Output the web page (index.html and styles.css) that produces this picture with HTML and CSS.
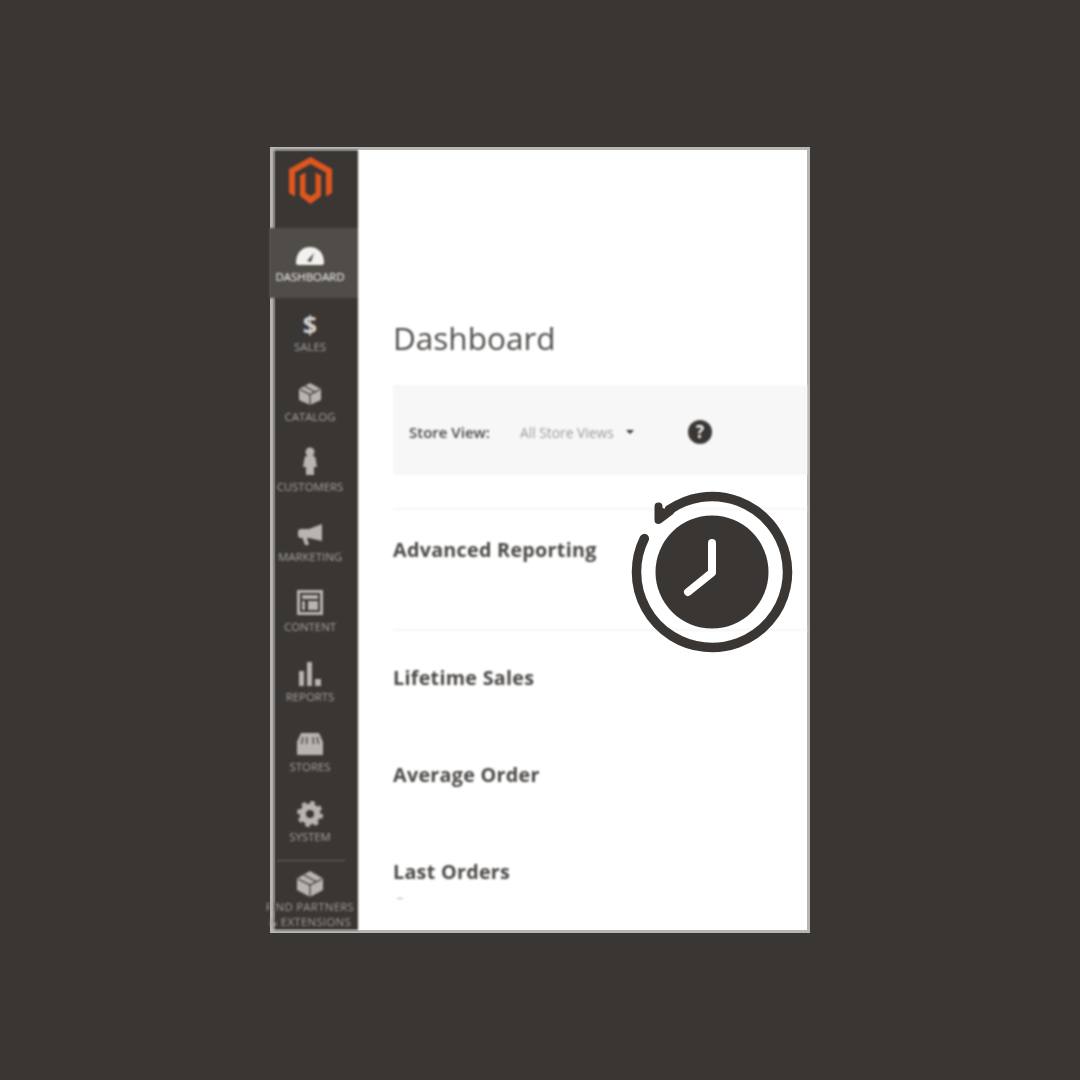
FILE: index.html
```html
<!DOCTYPE html>
<html lang="en">
<head>
    <meta charset="UTF-8">
    <meta name="viewport" content="width=device-width, initial-scale=1.0">
    <title>Dashboard</title>
    <link rel="stylesheet" href="styles.css">
</head>
<body>
    <div class="frame">
        <nav class="sidebar">
            <div class="logo">
                <svg width="43" height="47" viewBox="0 0 43 47">
                    <path fill="#e0561f" d="M21.500 0 43 12V36L37 39.500V15.500L21.500 7 6 15.500V39.500L0 36V12Z"/>
                    <path fill="#e0561f" d="M11 18.500 16.500 15.500V36L21.500 39 26.500 36V15.500L32 18.500V39L21.500 47 11 39Z"/>
                </svg>
            </div>
            <a class="nav-item active">
                <svg class="nav-icon" viewBox="0 0 28 28"><path d="M0 23C0 13 6 7 14 7s14 6 14 16a2 2 0 0 1-2 2H2a2 2 0 0 1-2-2Z"/><path class="cut" d="M11 21 18 13 15 22Z"/></svg>
                <span>Dashboard</span>
            </a>
            <a class="nav-item">
                <span class="dollar">$</span>
                <span>Sales</span>
            </a>
            <a class="nav-item">
                <svg class="nav-icon" viewBox="0 0 28 28"><path d="M14 3 25 9V20L14 25 3 20V9Z"/><path class="cut-line" d="M4 9.500 14 14.500 24 9.500M14 14.500V25M8.500 6 19 12"/></svg>
                <span>Catalog</span>
            </a>
            <a class="nav-item">
                <svg class="nav-icon" viewBox="0 0 28 28"><g transform="translate(0 -3)"><circle cx="14" cy="5" r="4.500"/><path d="M8.500 11a2.500 2.500 0 0 1 2.500-2h6A2.500 2.500 0 0 1 19.500 11l1.500 9h-3v8h-8v-8H7Z"/></g></svg>
                <span>Customers</span>
            </a>
            <a class="nav-item">
                <svg class="nav-icon" viewBox="0 0 28 28"><path d="M26 4V21L13 18H11L13 25H9L6.500 18H5a3 3 0 0 1-3-3v-3a3 3 0 0 1 3-3h8Z"/></svg>
                <span>Marketing</span>
            </a>
            <a class="nav-item">
                <svg class="nav-icon" viewBox="0 0 28 28"><path fill-rule="evenodd" d="M1 0H27V25H1ZM4 3V22H24V3Z"/><path d="M6 5H22V9H6ZM6 11H9V20H6ZM12 11H22V20H12Z"/></svg>
                <span>Content</span>
            </a>
            <a class="nav-item">
                <svg class="nav-icon" viewBox="0 0 28 28"><rect x="3" y="11" width="5" height="15"/><rect x="11" y="2" width="5" height="24"/><rect x="19" y="19" width="6" height="7"/></svg>
                <span>Reports</span>
            </a>
            <a class="nav-item">
                <svg class="nav-icon" viewBox="0 0 28 28"><path d="M5 3H23L27 12V24a1 1 0 0 1-1 1H2a1 1 0 0 1-1-1V12Z"/><path class="cut-line" d="M7 7 5.500 14M11 7 10.500 14M17 7 17.500 14M21 7 22.500 14"/></svg>
                <span>Stores</span>
            </a>
            <a class="nav-item">
                <svg class="nav-icon" viewBox="0 0 28 28"><circle cx="14" cy="14" r="11" fill="none" stroke="currentColor" stroke-width="4" stroke-dasharray="4.320 4.320"/><path fill-rule="evenodd" d="M14 3.500a10.500 10.500 0 1 1 0 21 10.500 10.500 0 0 1 0-21ZM14 10a4 4 0 1 0 0 8 4 4 0 0 0 0-8Z"/></svg>
                <span>System</span>
            </a>
            <div class="nav-rule"></div>
            <a class="nav-item partners">
                <svg class="nav-icon" viewBox="0 0 28 28"><path d="M14 1 27 8.500V20L14 27 1 20V8.500Z"/><path class="cut-line" d="M2 9 14 15 26 9M14 15V27M8 5 20 11.500"/></svg>
                <span>Find Partners<br>&amp; Extensions</span>
            </a>
        </nav>

        <main class="content">
            <h1>Dashboard</h1>
            <div class="store-bar">
                <span class="store-label">Store View:</span>
                <span class="store-value">All Store Views</span>
                <span class="caret"></span>
                <span class="help">?</span>
            </div>
            <section class="block block-reporting"><h2>Advanced Reporting</h2></section>
            <section class="block block-sales"><h2>Lifetime Sales</h2></section>
            <section class="block block-plain"><h2>Average Order</h2></section>
            <section class="block block-plain"><h2>Last Orders</h2><span class="dash"></span></section>
        </main>

        <svg class="clock" width="170" height="170" viewBox="0 0 170 170">
            <path class="clock-ring" d="M17.280 51.630A75.500 75.500 0 1 0 42.250 22.770"/>
            <path class="clock-arrow" d="M31.500 19.500V33L43.500 24"/>
            <circle cx="85" cy="85" r="56.500" fill="#3a3633"/>
            <path class="clock-hands" d="M85 56V85.700L61 105"/>
        </svg>
    </div>
</body>
</html>
```

FILE: styles.css
```css
body {
    margin: 0;
    height: 1080px;
    display: flex;
    align-items: center;
    justify-content: center;
    background-color: #3a3633;
    font-family: "Open Sans", Arial, sans-serif;
}
.frame {
    position: relative;
    display: flex;
    width: 533px;
    height: 780px;
    border: 3px solid #b8b6b3;
    border-left-width: 4px;
    background-color: #fff;
}

/* sidebar */
.sidebar {
    width: 84px;
    flex: none;
    background-color: #3a3633;
    color: #a09d98;
    filter: blur(0.8px);
}
.logo {
    height: 78px;
    padding: 7px 12px 0 0;
    box-sizing: border-box;
    display: flex;
    justify-content: center;
}
.nav-item {
    height: 70px;
    display: flex;
    flex-direction: column;
    align-items: center;
    justify-content: flex-end;
    padding: 0 12px 14px 0;
    box-sizing: border-box;
    font-size: 11.4px;
    line-height: 15px;
    text-transform: uppercase;
    text-align: center;
    white-space: nowrap;
}
.nav-item.active {
    margin-left: -5px;
    padding-left: 5px;
    background-color: #504c48;
    color: #f2f1ef;
}
.nav-icon {
    width: 28px;
    height: 28px;
    margin-bottom: 1px;
    fill: currentColor;
    overflow: visible;
    color: #b8b5b1;
}
.active .nav-icon {
    color: #f2f1ef;
}
.nav-icon .cut {
    fill: #504c48;
}
.nav-icon .cut-line {
    fill: none;
    stroke: #3a3633;
    stroke-width: 1.2;
}
.dollar {
    font-size: 25px;
    line-height: 30px;
    font-weight: 700;
    color: #d6d4d1;
}
.nav-rule {
    height: 1px;
    margin: 2px 13px 0 3px;
    background-color: #6a6662;
}
.nav-item.partners {
    height: 69px;
    padding-bottom: 1px;
    letter-spacing: 0.3px;
}

/* main column */
.content {
    flex: 1;
    min-width: 0;
    padding-left: 35px;
    overflow: hidden;
    color: #4a4744;
    filter: blur(0.8px);
}
h1 {
    margin: 166px 0 0;
    font-size: 31.5px;
    line-height: 44px;
    font-weight: 400;
    color: #514e4b;
}
.store-bar {
    display: flex;
    align-items: center;
    height: 90px;
    margin-top: 25px;
    padding: 4px 0 0 16px;
    box-sizing: border-box;
    background-color: #f7f7f7;
}
.store-label {
    width: 111px;
    font-size: 15px;
    font-weight: 600;
}
.store-value {
    width: 106px;
    font-size: 13.8px;
    color: #9a9a9a;
}
.caret {
    width: 0;
    height: 0;
    border: 4px solid transparent;
    border-top-color: #333;
    border-bottom: 0;
}
.help {
    width: 24px;
    height: 24px;
    margin-left: 54px;
    border-radius: 50%;
    background-color: #3a3633;
    color: #fff;
    font-size: 17px;
    line-height: 24px;
    font-weight: 700;
    text-align: center;
}
.block {
    position: relative;
}
.block h2 {
    margin: 0;
    font-size: 19.7px;
    line-height: 26px;
    font-weight: 700;
    letter-spacing: 0.3px;
    color: #4a4744;
}
.block-reporting {
    height: 121px;
    margin-top: 33px;
    padding-top: 27px;
    box-sizing: border-box;
    border-top: 2px solid #f5f5f5;
}
.block-sales {
    height: 99px;
    padding-top: 34px;
    box-sizing: border-box;
    border-top: 2px solid #f5f5f5;
}
.block-plain {
    height: 97px;
    padding-top: 34px;
    box-sizing: border-box;
}
.dash {
    position: absolute;
    left: 4px;
    top: 73px;
    width: 6px;
    height: 1px;
    background-color: #aaa;
}

/* clock badge sits over the page */
.clock {
    position: absolute;
    left: 353px;
    top: 337px;
}
.clock-ring {
    fill: none;
    stroke: #3a3633;
    stroke-width: 9.5;
    stroke-linecap: round;
}
.clock-arrow {
    fill: #3a3633;
    stroke: #3a3633;
    stroke-width: 8;
    stroke-linejoin: round;
    stroke-linecap: round;
}
.clock-hands {
    fill: none;
    stroke: #fff;
    stroke-width: 8;
    stroke-linecap: round;
    stroke-linejoin: round;
}
```
